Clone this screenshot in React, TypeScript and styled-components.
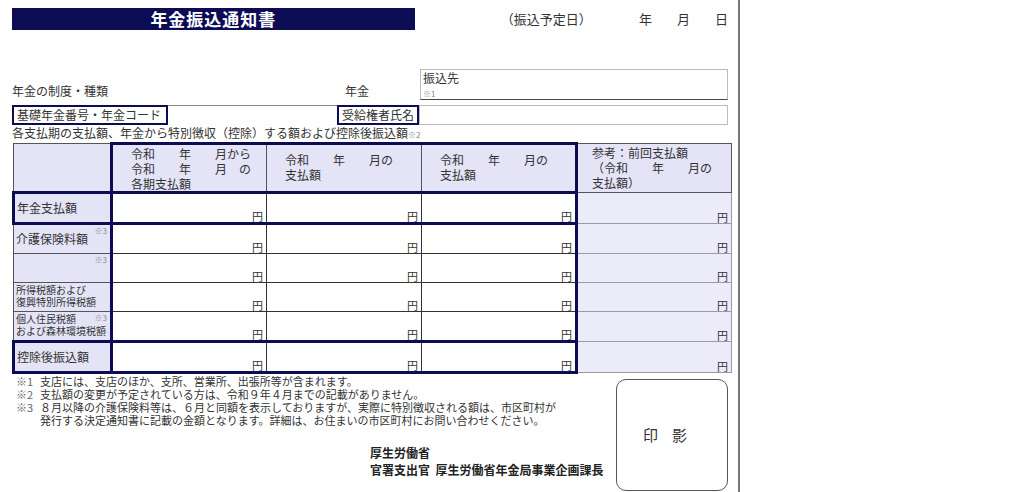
import React from "react";
import styled, { createGlobalStyle } from "styled-components";

const G = createGlobalStyle`
  body { margin:0; background:#fff; font-family:"Noto Sans CJK JP","Liberation Sans",sans-serif; color:#333; }
`;
const NAVY = "#0c0c55";
const LAV = "#e4e4f6";
const LAV2 = "#ebebfa";

const Page = styled.div`
  width: 740px; height: 492px; border-right: 2px solid #777; box-sizing: border-box;
  padding: 8px 10px 0 12px; font-size: 12px; line-height: 1.2;
`;
const TopRow = styled.div`display:flex; align-items:center; height:22px;`;
const Title = styled.div`
  width: 408px; height: 22px; background:${NAVY}; color:#fff; font-weight:700; font-size:17px;
  display:flex; align-items:center; justify-content:center; letter-spacing:1px;
`;
const DateText = styled.div`margin-left:86px; font-size:13px; width:140px;`;
const Ymd = styled.div`display:flex; gap:25px; font-size:13px; margin-left:auto;`;
const InfoRow = styled.div`display:flex; align-items:flex-end; margin-top:39px;`;
const Label = styled.div<{ w: number }>`width:${p => p.w}px; padding-bottom:2px;`;
const Furikomi = styled.div`
  width:308px; height:31px; border:1px solid #bbb; border-bottom:1px solid #444; box-sizing:border-box;
  padding:1px 2px; line-height:14px;
`;
const Small = styled.span`font-size:8px; color:#888;`;
const IdRow = styled.div`display:flex; align-items:stretch; height:20px; margin-top:5px;`;
const Boxed = styled.div<{ w: number }>`
  width:${p => p.w}px; border:2px solid ${NAVY}; box-sizing:border-box; padding:0 3px; display:flex; align-items:center; white-space:nowrap;
`;
const Blank = styled.div<{ w: number }>`width:${p => p.w}px; border-top:1px solid #888;`;
const NameBox = styled.div`width:310px; border:1px solid #bbb; box-sizing:border-box;`;
const Caption = styled.div`margin-top:1px; height:16px;`;
const Table = styled.table`
  border-collapse: collapse; width:718px; table-layout:fixed; font-size:12px;
`;
const Th = styled.th<{ bg?: string; thick?: string }>`
  text-align:left; font-weight:400; background:${p => p.bg || LAV}; vertical-align:top; padding:1px 4px 0 18px;
  height:44px; border:1px solid #555; line-height:15px;
  ${p => p.thick}
`;
const Td = styled.td<{ bg?: string; thick?: string }>`
  background:${p => p.bg || "#fff"}; border:1px solid #333; height:28px; padding:0 3px 0 2px;
  text-align:right; vertical-align:bottom; font-size:11px; line-height:12px; position:relative;
  ${p => p.thick}
`;
const Lbl = styled.div<{ small?: boolean }>`
  text-align:left; font-size:${p => (p.small ? 10 : 12)}px; line-height:${p => (p.small ? 12 : 14)}px;
  position:absolute; left:2px; top:${p => (p.small ? 1 : 7)}px; white-space:nowrap;
`;
const Note = styled.span`position:absolute; right:3px; top:0; font-size:8px; color:#888;`;
const Bottom = styled.div`display:flex; margin-top:1px;`;
const Notes = styled.div`flex:1; font-size:11px; line-height:13px; padding-left:4px;`;
const NoteRow = styled.div`display:flex;`;
const Mark = styled.span`width:24px; flex:none; color:#666;`;
const Sign = styled.div`margin-left:354px; margin-top:17px; font-weight:700; font-size:12px; line-height:17px; color:#222;`;
const Stamp = styled.div`
  width:112px; height:112px; border:1px solid #555; border-radius:10px; box-sizing:border-box; margin-top:4px;
  display:flex; align-items:center; justify-content:center; font-size:15px; letter-spacing:14px;
`;

const TB = `3px solid ${NAVY}`;
const rows: { label: React.ReactNode; small?: boolean; note?: boolean; strong?: boolean }[] = [
  { label: "年金支払額", strong: true },
  { label: "介護保険料額", note: true },
  { label: "", note: true },
  { label: <>所得税額および<br />復興特別所得税額</>, small: true },
  { label: <>個人住民税額<br />および森林環境税額</>, small: true, note: true },
  { label: "控除後振込額", strong: true },
];

export default function App() {
  return (
    <Page>
      <G />
      <TopRow>
        <Title>年金振込通知書</Title>
        <DateText>（振込予定日）</DateText>
        <Ymd><span>年</span><span>月</span><span>日</span></Ymd>
      </TopRow>
      <InfoRow>
        <Label w={333}>年金の制度・種類</Label>
        <Label w={75}>年金</Label>
        <Furikomi>振込先<br /><Small>※1</Small></Furikomi>
      </InfoRow>
      <IdRow>
        <Boxed w={156}>基礎年金番号・年金コード</Boxed>
        <Blank w={170} />
        <Boxed w={82}>受給権者氏名</Boxed>
        <NameBox />
      </IdRow>
      <Caption>各支払期の支払額、年金から特別徴収（控除）する額および控除後振込額<Small>※2</Small></Caption>
      <Table>
        <colgroup>
          <col style={{ width: 98 }} /><col style={{ width: 155 }} /><col style={{ width: 155 }} /><col style={{ width: 155 }} /><col style={{ width: 155 }} />
        </colgroup>
        <thead>
          <tr>
            <Th />
            <Th thick={`border-top:${TB};border-left:${TB};border-bottom:${TB};`}>令和　　年　　月から<br />令和　　年　　月　の<br />各期支払額</Th>
            <Th thick={`border-top:${TB};border-bottom:${TB};`}><div style={{ paddingTop: 6 }}>令和　　年　　月の<br />支払額</div></Th>
            <Th thick={`border-top:${TB};border-right:${TB};border-bottom:${TB};`}><div style={{ paddingTop: 6 }}>令和　　年　　月の<br />支払額</div></Th>
            <Th style={{ paddingLeft: 14 }}>参考：前回支払額<br />（令和　　年　　月の<br />支払額）</Th>
          </tr>
        </thead>
        <tbody>
          {rows.map((r, i) => {
            const last = i === rows.length - 1;
            const rowThick = r.strong ? `border-top:${TB};border-bottom:${TB};` : "";
            const lblThick = r.strong ? `border:${TB};` : `border-color:#555;border-right:${TB};`;
            return (
              <tr key={i}>
                <Td bg={LAV} thick={lblThick}>
                  <Lbl small={r.small}>{r.label}</Lbl>
                  {r.note && <Note>※3</Note>}
                  &nbsp;
                </Td>
                <Td thick={rowThick + `border-left:${TB};` + (last ? `border-bottom:${TB};` : "")}>円</Td>
                <Td thick={rowThick + (last ? `border-bottom:${TB};` : "")}>円</Td>
                <Td thick={rowThick + `border-right:${TB};` + (last ? `border-bottom:${TB};` : "")}>円</Td>
                <Td bg={LAV2} thick="border-color:#99a;">円</Td>
              </tr>
            );
          })}
        </tbody>
      </Table>
      <Bottom>
        <Notes>
          <NoteRow><Mark>※1</Mark>支店には、支店のほか、支所、営業所、出張所等が含まれます。</NoteRow>
          <NoteRow><Mark>※2</Mark>支払額の変更が予定されている方は、令和９年４月までの記載がありません。</NoteRow>
          <NoteRow><Mark>※3</Mark>８月以降の介護保険料等は、６月と同額を表示しておりますが、実際に特別徴収される額は、市区町村が</NoteRow>
          <NoteRow><Mark />発行する決定通知書に記載の金額となります。詳細は、お住まいの市区町村にお問い合わせください。</NoteRow>
          <Sign>厚生労働省<br />官署支出官&nbsp; 厚生労働省年金局事業企画課長</Sign>
        </Notes>
        <Stamp>印影</Stamp>
      </Bottom>
    </Page>
  );
}
